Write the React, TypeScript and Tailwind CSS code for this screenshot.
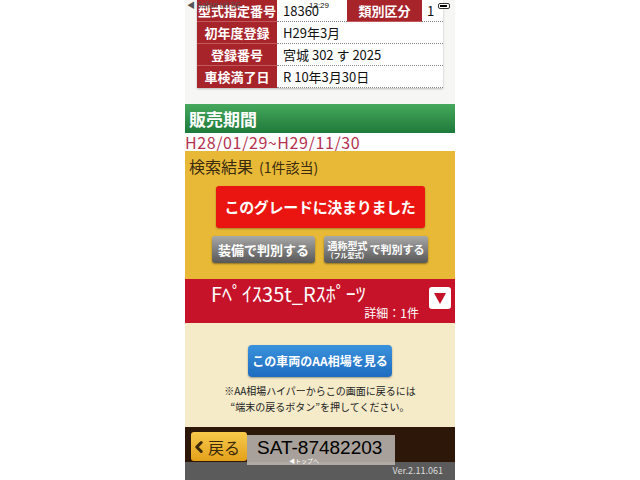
import { ChevronLeft } from 'lucide-react';

const jp = '"Noto Sans CJK JP", "Noto Sans", sans-serif';

function InfoRow({ label, value, last }: { label: string; value: string; last?: boolean }) {
  return (
    <div className="flex h-[22px]">
      <div
        className={`flex w-[80px] items-center justify-center bg-[#a8242b] text-[13px] font-bold text-white ${last ? '' : 'border-b border-[#c0585c]'}`}
      >
        {label}
      </div>
      <div className="flex flex-1 items-center border-b border-dotted border-[#888] bg-white pl-[6px] text-[13px] text-[#111]">
        {value}
      </div>
    </div>
  );
}

export default function App() {
  return (
    <div className="flex h-[480px] w-[640px] justify-center bg-white" style={{ fontFamily: jp }}>
      <div className="relative flex h-[480px] w-[270px] flex-col overflow-hidden bg-[#f6f6f4]">
        {/* 車両情報 */}
        <div className="ml-[12px] w-[246px] shadow-[0_1px_2px_rgba(0,0,0,0.25)]">
          <div className="flex h-[22px]">
            <div className="flex w-[80px] items-center justify-center border-b border-[#c0585c] bg-[#a8242b] text-[13px] font-bold text-white">
              型式指定番号
            </div>
            <div className="flex w-[70px] items-center border-b border-dotted border-[#888] bg-white pl-[6px] text-[13px] text-[#111]">
              18360
            </div>
            <div className="flex w-[75px] items-center justify-center border-b border-[#c0585c] bg-[#a8242b] text-[13px] font-bold text-white">
              類別区分
            </div>
            <div className="flex flex-1 items-center border-b border-dotted border-[#888] bg-white pl-[5px] text-[13px] text-[#111]">
              1
            </div>
          </div>
          <InfoRow label="初年度登録" value="H29年3月" />
          <InfoRow label="登録番号" value="宮城 302 す 2025" />
          <InfoRow label="車検満了日" value="R 10年3月30日" last />
        </div>

        <div className="h-[16px]" />

        {/* 販売期間 */}
        <div className="flex h-[29px] items-center bg-gradient-to-b from-[#45a85c] to-[#1e7a3a] pl-[4px] text-[17px] font-bold text-white">
          販売期間
        </div>
        <div className="flex h-[18px] items-center whitespace-nowrap bg-white text-[16px] leading-none tracking-[0.6px] text-[#b3324f]">
          H28/01/29~H29/11/30
        </div>

        {/* 検索結果 */}
        <div className="flex h-[128px] flex-col bg-[#e8b936]">
          <div className="flex items-baseline pl-[4px] pt-[3px] text-[#3a2a10]">
            <span className="text-[16px]">検索結果</span>
            <span className="ml-[6px] text-[14px]">(1件該当)</span>
          </div>
          <div className="mx-auto mt-[8px] flex h-[42px] w-[209px] items-center justify-center whitespace-nowrap rounded-[3px] bg-[#ea1510] text-[15px] font-bold tracking-[-0.3px] text-white shadow-[0_1px_2px_rgba(0,0,0,0.3)]">
            このグレードに決まりました
          </div>
          <div className="mt-[8px] flex justify-center gap-[9px]">
            <div className="flex h-[27px] w-[103px] items-center justify-center whitespace-nowrap rounded-[3px] bg-gradient-to-b from-[#a8a8a8] to-[#585858] text-[13px] font-bold text-white shadow-[0_1px_2px_rgba(0,0,0,0.4)]">
              装備で判別する
            </div>
            <div className="flex h-[27px] w-[104px] items-center justify-center gap-[2px] whitespace-nowrap rounded-[3px] bg-gradient-to-b from-[#a8a8a8] to-[#585858] font-bold text-white shadow-[0_1px_2px_rgba(0,0,0,0.4)]">
              <div className="flex flex-col items-center">
                <span className="text-[10px] leading-[11px]">通称型式</span>
                <span className="text-[7px] leading-[9px]">(フル型式)</span>
              </div>
              <span className="text-[11px]">で判別する</span>
            </div>
          </div>
        </div>

        {/* グレード */}
        <div className="relative flex h-[44px] flex-col bg-[#c61329] text-white">
          <div className="whitespace-nowrap pl-[26px] pt-[2px] text-[20px] leading-[25px]">Fﾍﾟｲｽ35t_Rｽﾎﾟｰﾂ</div>
          <div className="pr-[36px] text-right text-[12px] leading-[14px]">詳細：1件</div>
          <div className="absolute right-[4px] top-[8px] flex h-[22px] w-[22px] items-center justify-center rounded-[3px] bg-white">
            <svg width="12" height="11" viewBox="0 0 12 11">
              <path d="M0 0 H12 L6 11 Z" fill="#c61329" />
            </svg>
          </div>
        </div>

        {/* AA相場 */}
        <div className="flex h-[104px] flex-col items-center bg-[#f5ebc9]">
          <div className="mt-[22px] flex h-[32px] w-[144px] items-center justify-center whitespace-nowrap rounded-[4px] bg-gradient-to-b from-[#3a92dc] to-[#1f6cc0] text-[12px] font-bold text-white shadow-[0_1px_2px_rgba(0,0,0,0.35)]">
            この車両のAA相場を見る
          </div>
          <div className="mt-[6px] text-center text-[10px] leading-[16px] text-[#222]">
            <div>※AA相場ハイパーからこの画面に戻るには</div>
            <div>“端末の戻るボタン”を押してください。</div>
          </div>
        </div>

        {/* フッター */}
        <div className="flex h-[35px] items-end bg-[#2c1709] pb-[1px] pl-[6px]">
          <div className="flex h-[29px] w-[56px] items-center rounded-[3px] bg-gradient-to-b from-[#f7c94a] to-[#e3a117] text-[#3b2a0a]">
            <ChevronLeft size={18} strokeWidth={4} className="ml-[-1px]" />
            <span className="whitespace-nowrap text-[16px]">戻る</span>
          </div>
        </div>
        <div className="flex flex-1 items-center justify-end bg-[#5b5b5b] pr-[12px] text-[9px] text-[#dcdcdc]">
          Ver.2.11.061
        </div>

        {/* オーバーレイ */}
        <div
          className="absolute left-[62px] top-[435px] flex h-[30px] w-[148px] items-start bg-[rgba(190,185,180,0.85)] pl-[10px] pt-[2px] text-[19px] leading-[21px] text-black"
          style={{ fontFamily: '"Liberation Sans", sans-serif' }}
        >
          SAT-87482203
        </div>
        <div className="absolute left-[104px] top-[458px] text-[6px] leading-none text-white">◀トップへ</div>

        {/* ステータスバー */}
        <div className="absolute left-[2px] top-[1px] text-[8px] leading-none text-[#555]">◀ Safari ııll 5G</div>
        <div
          className="absolute left-[124px] top-[2px] text-[8px] leading-none text-[#111]"
          style={{ fontFamily: '"Liberation Sans", sans-serif' }}
        >
          13:29
        </div>
        <div className="absolute right-[5px] top-[3px] h-[6px] w-[12px] rounded-[2px] border border-[#333] bg-white p-[1px]">
          <div className="h-full w-[7px] bg-black" />
        </div>
      </div>
    </div>
  );
}
